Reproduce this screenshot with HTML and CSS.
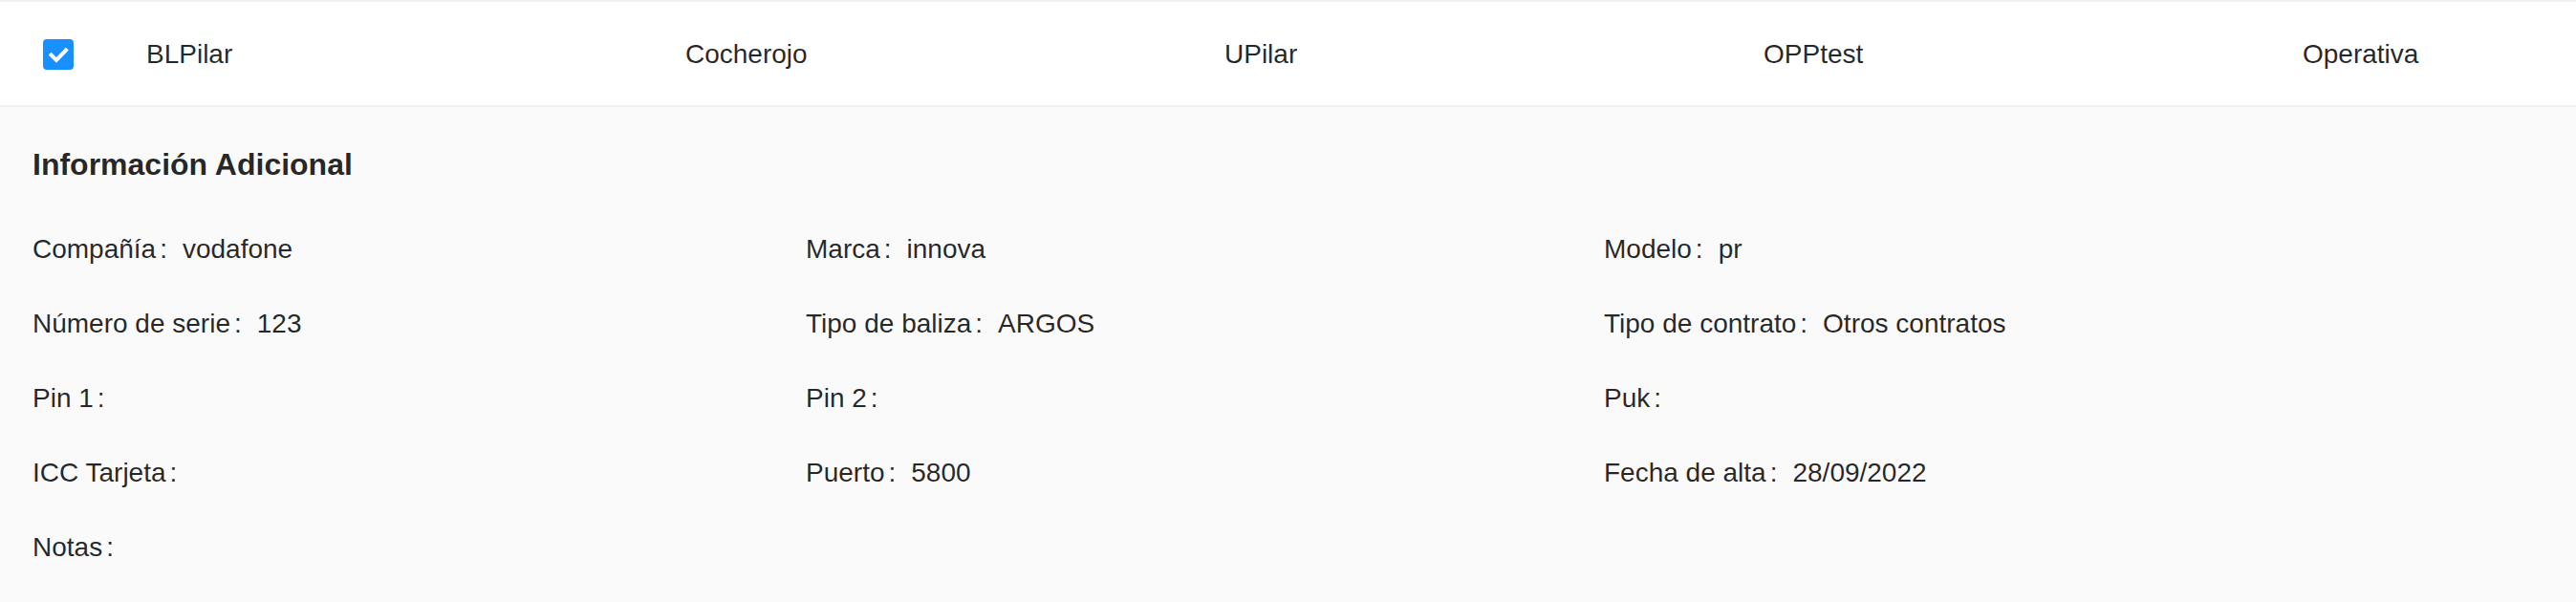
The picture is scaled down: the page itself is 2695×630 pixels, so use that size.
FILE: index.html
```html
<!DOCTYPE html>
<html lang="es">
<head>
<meta charset="utf-8">
<title>Balizas</title>
<link rel="stylesheet" href="styles.css">
</head>
<body>
<div class="table">
  <div class="row">
    <div class="cell cell-select">
      <span class="checkbox">
        <svg viewBox="0 0 32 32" width="32" height="32" aria-hidden="true"><polyline points="8.5,16.5 14,22 24,11.5" fill="none" stroke="#fff" stroke-width="4" stroke-linejoin="miter" stroke-linecap="square"/></svg>
      </span>
    </div>
    <div class="cell">BLPilar</div>
    <div class="cell">Cocherojo</div>
    <div class="cell">UPilar</div>
    <div class="cell">OPPtest</div>
    <div class="cell">Operativa</div>
  </div>
  <div class="expanded">
    <div class="desc-title">Información Adicional</div>
    <div class="desc-grid">
      <div class="item"><span class="label">Compañía</span><span class="value">vodafone</span></div>
      <div class="item"><span class="label">Marca</span><span class="value">innova</span></div>
      <div class="item"><span class="label">Modelo</span><span class="value">pr</span></div>
      <div class="item"><span class="label">Número de serie</span><span class="value">123</span></div>
      <div class="item"><span class="label">Tipo de baliza</span><span class="value">ARGOS</span></div>
      <div class="item"><span class="label">Tipo de contrato</span><span class="value">Otros contratos</span></div>
      <div class="item"><span class="label">Pin 1</span><span class="value"></span></div>
      <div class="item"><span class="label">Pin 2</span><span class="value"></span></div>
      <div class="item"><span class="label">Puk</span><span class="value"></span></div>
      <div class="item"><span class="label">ICC Tarjeta</span><span class="value"></span></div>
      <div class="item"><span class="label">Puerto</span><span class="value">5800</span></div>
      <div class="item"><span class="label">Fecha de alta</span><span class="value">28/09/2022</span></div>
      <div class="item"><span class="label">Notas</span><span class="value"></span></div>
    </div>
  </div>
</div>
</body>
</html>
```
FILE: styles.css
```css
html, body {
  margin: 0;
  padding: 0;
  background: #fafafa;
}

body {
  font-family: "Liberation Sans", Arial, sans-serif;
  font-size: 28px;
  color: rgba(0, 0, 0, 0.85);
  width: 2695px;
  height: 630px;
  overflow: hidden;
}

.table {
  display: flex;
  flex-direction: column;
}

.row {
  display: grid;
  grid-template-columns: 121px 564px 564px 564px 564px 1fr;
  background: #ffffff;
  border-top: 2px solid #f0f0f0;
  border-bottom: 2px solid #f0f0f0;
}

.cell {
  padding: 33px 32px 31px 32px;
  line-height: 44px;
  white-space: nowrap;
}

.cell-select {
  display: flex;
  align-items: center;
  justify-content: center;
  padding: 0;
}

.checkbox {
  display: block;
  width: 32px;
  height: 32px;
  border-radius: 4px;
  background: #1890ff;
  margin-top: 2px;
  margin-left: 1px;
}

.checkbox svg {
  display: block;
}

.expanded {
  background: #fafafa;
  padding: 38px 0 0 34px;
}

.desc-title {
  font-size: 32px;
  font-weight: 700;
  line-height: 44px;
  color: rgba(0, 0, 0, 0.85);
  margin-bottom: 45px;
}

.desc-grid {
  display: grid;
  grid-template-columns: 809px 835px 1fr;
  row-gap: 34px;
}

.item {
  line-height: 44px;
  white-space: nowrap;
}

.label::after {
  content: ":";
  margin: 0 16px 0 4px;
}
```
